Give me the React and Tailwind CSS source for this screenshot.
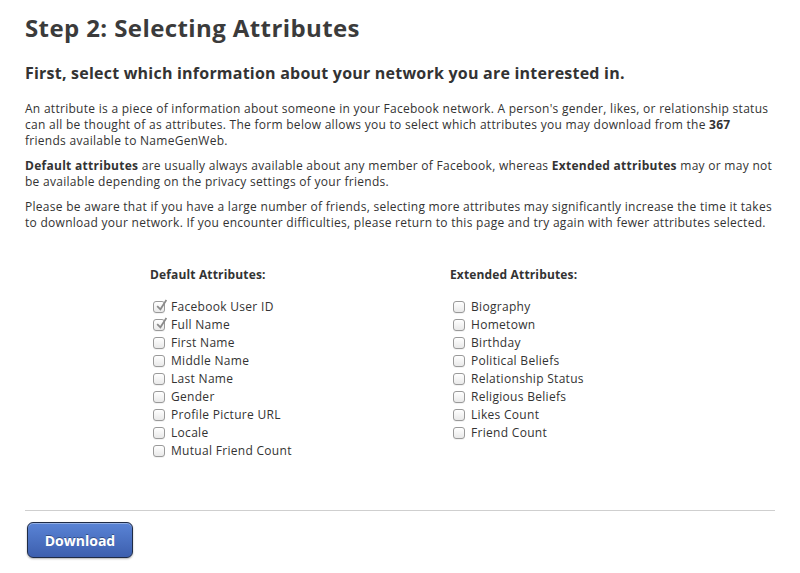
const defaults = [
  { label: "Facebook User ID", checked: true },
  { label: "Full Name", checked: true },
  { label: "First Name" },
  { label: "Middle Name" },
  { label: "Last Name" },
  { label: "Gender" },
  { label: "Profile Picture URL" },
  { label: "Locale" },
  { label: "Mutual Friend Count" },
];

const extended = [
  "Biography",
  "Hometown",
  "Birthday",
  "Political Beliefs",
  "Relationship Status",
  "Religious Beliefs",
  "Likes Count",
  "Friend Count",
].map((label) => ({ label }));

function Box({ checked }) {
  return (
    <span className="relative flex h-[12px] w-[12px] shrink-0 items-center justify-center rounded-[3px] border border-[#9a9a9a] bg-gradient-to-b from-white to-[#e9e9e9] shadow-[0_1px_0_rgba(0,0,0,0.05)]">
      {checked && (
        <svg
          viewBox="0 0 12 12"
          className="absolute -top-[3px] left-[1px] h-[13px] w-[13px]"
        >
          <path
            d="M2 6.5 L5 9.5 L10.5 1"
            fill="none"
            stroke="#8a8a8a"
            strokeWidth="1.6"
          />
        </svg>
      )}
    </span>
  );
}

function Column({ title, items }) {
  return (
    <div className="w-[300px]">
      <h3 className="text-[12px] font-bold leading-[16px] tracking-[0.15px]">{title}</h3>
      <ul className="mt-[15px]">
        {items.map((it) => (
          <li key={it.label} className="flex h-[18px] items-center gap-[6px] pl-[3px]">
            <Box checked={it.checked} />
            <span className="text-[12px] tracking-[0.3px]">{it.label}</span>
          </li>
        ))}
      </ul>
    </div>
  );
}

export default function App() {
  return (
    <div
      className="min-h-[573px] bg-white px-[25px] pt-[12px] text-[#333]"
      style={{ fontFamily: '"Open Sans", "Noto Sans", sans-serif' }}
    >
      <h1 className="text-[24px] font-bold leading-[32px] tracking-[0.4px] text-[#3b3b3b]">
        Step 2: Selecting Attributes
      </h1>
      <h2 className="mt-[18px] text-[16px] font-bold leading-[22px] tracking-[0.22px]">
        First, select which information about your network you are interested in.
      </h2>

      <div className="mt-[17px] space-y-[9px] whitespace-nowrap text-[12px] leading-[16px] tracking-[0.28px]">
        <p>
          An attribute is a piece of information about someone in your Facebook
          network. A person's gender, likes, or relationship status
          <br />
          can all be thought of as attributes. The form below allows you to
          select which attributes you may download from the <b>367</b>
          <br />
          friends available to NameGenWeb.
        </p>
        <p>
          <b>Default attributes</b> are usually always available about any member
          of Facebook, whereas <b>Extended attributes</b> may or may not
          <br />
          be available depending on the privacy settings of your friends.
        </p>
        <p>
          Please be aware that if you have a large number of friends, selecting
          more attributes may significantly increase the time it takes
          <br />
          to download your network. If you encounter difficulties, please return
          to this page and try again with fewer attributes selected.
        </p>
      </div>

      <div className="mt-[36px] flex pl-[125px]">
        <Column title="Default Attributes:" items={defaults} />
        <Column title="Extended Attributes:" items={extended} />
      </div>

      <hr className="mt-[50px] border-t border-[#cfcfcf]" />

      <button className="ml-[2px] mt-[11px] h-[36px] w-[106px] rounded-[6px] border border-[#1f2b45] bg-gradient-to-b from-[#5a84d6] to-[#3d5fae] text-[14px] font-bold text-white shadow-[inset_0_1px_0_rgba(255,255,255,0.35),0_1px_2px_rgba(0,0,0,0.3)] [text-shadow:0_-1px_0_rgba(0,0,0,0.35)]">
        Download
      </button>
    </div>
  );
}
